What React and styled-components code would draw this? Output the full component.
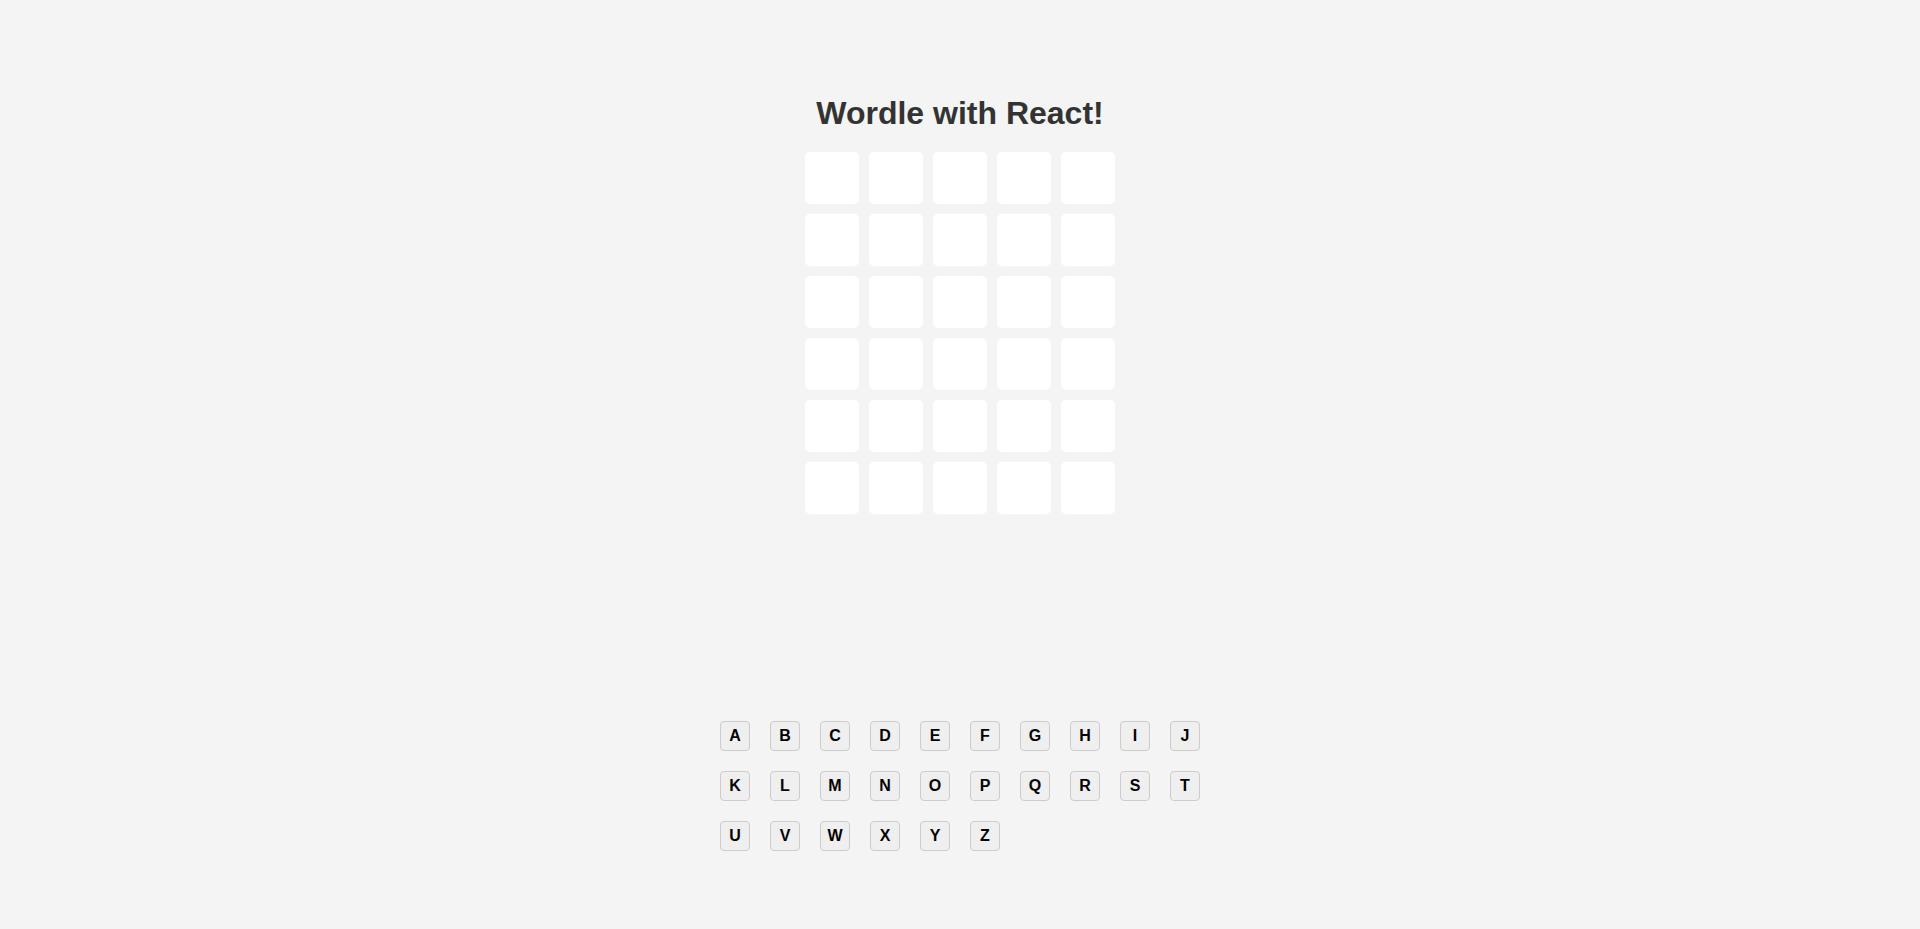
import React from "react";
import styled, { createGlobalStyle } from "styled-components";

const GlobalStyle = createGlobalStyle`
  * { box-sizing: border-box; }
  body { margin: 0; background: #f4f4f4; font-family: "Liberation Sans", Arial, sans-serif; }
`;
const Page = styled.main`
  display: flex;
  flex-direction: column;
  align-items: center;
  min-height: 100vh;
  padding-top: 94px;
`;
const Title = styled.h1`
  margin: 0 0 20px;
  color: #333;
  font-size: 32px;
  line-height: 38px;
  font-weight: 700;
`;
const Board = styled.div`
  display: grid;
  grid-template-columns: repeat(5, 54px);
  grid-auto-rows: 52px;
  gap: 10px;
`;
const Tile = styled.div`
  background: #fff;
  border-radius: 5px;
`;
const Keyboard = styled.div`
  display: grid;
  grid-template-columns: repeat(10, 30px);
  grid-auto-rows: 30px;
  gap: 20px;
  margin-top: 207px;
`;
const Key = styled.button`
  display: flex;
  align-items: center;
  justify-content: center;
  padding: 0;
  border: 1px solid #ccc;
  border-radius: 4px;
  background: #efefef;
  color: #000;
  font: 700 16px "Liberation Sans", Arial, sans-serif;
`;
const letters = "ABCDEFGHIJKLMNOPQRSTUVWXYZ".split("");

export default function App() {
  return (
    <Page>
      <GlobalStyle />
      <Title>Wordle with React!</Title>
      <Board>
        {Array.from({ length: 30 }, (_, i) => <Tile key={i} />)}
      </Board>
      <Keyboard>
        {letters.map((letter) => <Key key={letter}>{letter}</Key>)}
      </Keyboard>
    </Page>
  );
}
